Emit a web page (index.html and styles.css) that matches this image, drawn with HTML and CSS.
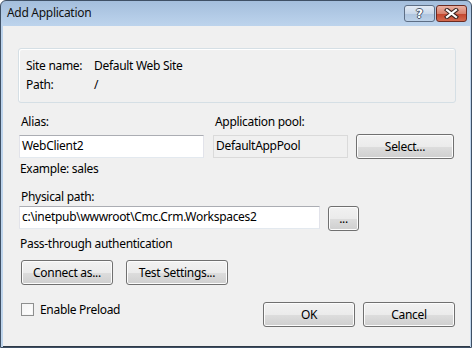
FILE: index.html
```html
<!DOCTYPE html>
<html lang="en">
<head>
  <meta charset="UTF-8" />
  <title>Add Application</title>
  <link rel="stylesheet" href="styles.css">
</head>
<body>

<div class="window">
  <!-- Title bar -->
  <div class="titlebar">
    <span class="title">Add Application</span>
    <div class="caption-btns">
      <div class="cap-btn help"><span>?</span></div>
      <div class="cap-btn close">
        <svg width="15" height="11" viewBox="0 0 15 11">
          <path d="M3 2 L12 9 M12 2 L3 9" stroke="#3a2420" stroke-width="4.2" stroke-linecap="square" fill="none"/>
          <path d="M3 2 L12 9 M12 2 L3 9" stroke="#fff" stroke-width="2.2" stroke-linecap="square" fill="none"/>
        </svg>
      </div>
    </div>
  </div>

  <!-- Client area -->
  <div class="client">
    <div class="groupbox">
      <div class="info-grid">
        <span>Site name:</span><span>Default Web Site</span>
        <span>Path:</span><span>/</span>
      </div>
    </div>

    <div class="alias-row">
      <div class="col alias-col">
        <label class="lbl">Alias:</label>
        <div class="textbox">WebClient2</div>
      </div>
      <div class="col pool-col">
        <label class="lbl lbl-low">Application pool:</label>
        <div class="textbox readonly">DefaultAppPool</div>
      </div>
      <div class="col select-col">
        <button class="btn select-btn">Select...</button>
      </div>
    </div>

    <p class="hint">Example: sales</p>

    <label class="lbl path-lbl">Physical path:</label>
    <div class="path-row">
      <div class="textbox path-box">c:\inetpub\wwwroot\Cmc.Crm.Workspaces2</div>
      <button class="btn browse-btn">...</button>
    </div>

    <p class="auth">Pass-through authentication</p>

    <div class="auth-btns">
      <button class="btn connect-btn">Connect as...</button>
      <button class="btn test-btn">Test Settings...</button>
    </div>

    <div class="bottom-row">
      <label class="check">
        <span class="checkbox"></span>
        Enable Preload
      </label>
      <div class="dialog-btns">
        <button class="btn ok-btn">OK</button>
        <button class="btn cancel-btn">Cancel</button>
      </div>
    </div>
  </div>
</div>

</body>
</html>
```

FILE: styles.css
```css
body {
  margin: 0;
  background-color: #fff;
  font-family: "Segoe UI", "Noto Sans", sans-serif;
  font-size: 12px;
  letter-spacing: -0.3px;
  color: #000;
}

.window {
  width: 472px;
  height: 348px;
  box-sizing: border-box;
  border: 1px solid #3f5065;
  border-radius: 6px 6px 0 0;
  background: linear-gradient(#a4bedc, #bcd3ec 24px, #bfd5ec);
  display: flex;
  flex-direction: column;
  padding: 0 1px 0 2px;
}

/* Title bar */
.titlebar {
  height: 25px;
  display: flex;
  justify-content: space-between;
  align-items: flex-start;
  flex-shrink: 0;
}
.title {
  padding: 4px 0 0 4px;
  line-height: 16px;
  color: #111;
}
.caption-btns {
  display: flex;
  gap: 1px;
  margin-top: 4px;
  margin-right: 3px;
}
.cap-btn {
  width: 29px;
  height: 15px;
  border: 1px solid #5d6e85;
  border-radius: 3px;
  display: flex;
  justify-content: center;
  align-items: center;
}
.cap-btn.help {
  background: linear-gradient(#e3ebf5, #c9d8ea 50%, #aec4de 51%, #bcd1e8);
}
.cap-btn.help span {
  font-family: "DejaVu Sans", sans-serif;
  font-weight: bold;
  font-size: 12px;
  line-height: 12px;
  letter-spacing: 0;
  color: #fff;
  text-shadow: 1px 0 #46566b, -1px 0 #46566b, 0 1px #46566b, 0 -1px #46566b;
}
.cap-btn.close {
  border-color: #6b2b22;
  background: linear-gradient(#eab1a3, #d8826e 50%, #c2442c 51%, #d46a4f);
}

/* Client area */
.client {
  flex: 1;
  background-color: #f0f0f0;
  padding: 22px 14px 0 15px;
  border-bottom: 1px solid #2e3a47;
}

.groupbox {
  border: 1px solid #d5dfe5;
  border-radius: 3px;
  box-shadow: inset 1px 1px 0 #fff;
  padding: 7px 7px 9px 7px;
  height: 37px;
}
.info-grid {
  display: grid;
  grid-template-columns: 68px auto;
  line-height: 19px;
}

.lbl {
  display: block;
  line-height: 16px;
  padding-left: 2px;
}
.lbl-low {
  padding-top: 2px;
  margin-bottom: -2px;
}

.alias-row {
  display: flex;
  align-items: flex-end;
  margin-top: 9px;
  padding-left: 1px;
}
.alias-col .lbl,
.pool-col .lbl {
  margin-bottom: 5px;
}
.alias-col {
  width: 185px;
}
.pool-col {
  width: 135px;
  margin-left: 9px;
}
.select-col {
  margin-left: 8px;
  margin-bottom: -1px;
}

.textbox {
  box-sizing: border-box;
  height: 23px;
  background-color: #fff;
  border: 1px solid #e2e3ea;
  border-top-color: #abadb3;
  border-bottom-color: #e3e9ef;
  padding: 0 2px;
  line-height: 20px;
}
.textbox.readonly {
  background-color: #f0f0f0;
  border-color: #dadada;
}

.btn {
  box-sizing: border-box;
  height: 25px;
  border: 1px solid #707070;
  border-radius: 3px;
  background: linear-gradient(#f2f2f2, #ebebeb 50%, #dddddd 51%, #cfcfcf);
  box-shadow: inset 0 0 0 1px #fcfcfc;
  font-family: inherit;
  font-size: 12px;
  letter-spacing: -0.3px;
  color: #000;
  padding: 0;
}
.select-btn {
  width: 98px;
}

.hint {
  margin: 3px 0 0 2px;
  line-height: 16px;
}
.path-lbl {
  margin-top: 12px;
  padding-left: 3px;
}
.path-row {
  display: flex;
  align-items: flex-start;
  margin-top: 1px;
  padding-left: 1px;
}
.path-box {
  width: 301px;
}
.browse-btn {
  width: 31px;
  margin-left: 8px;
}

.auth {
  margin: 5px 0 0 2px;
  line-height: 16px;
}

.auth-btns {
  display: flex;
  gap: 13px;
  margin-top: 8px;
  padding-left: 3px;
}
.connect-btn {
  width: 92px;
}
.test-btn {
  width: 102px;
}

.bottom-row {
  display: flex;
  justify-content: space-between;
  align-items: flex-start;
  margin-top: 17px;
  padding-left: 3px;
}
.check {
  display: flex;
  align-items: center;
  gap: 6px;
  margin-top: 1px;
  line-height: 13px;
}
.checkbox {
  box-sizing: border-box;
  width: 13px;
  height: 13px;
  border: 1px solid #8e8f8f;
  background: linear-gradient(135deg, #f4f4f4, #ffffff);
  box-shadow: inset 0 0 0 1px #f6f6f6;
}
.dialog-btns {
  display: flex;
  gap: 8px;
  margin-right: 1px;
}
.ok-btn,
.cancel-btn {
  width: 92px;
}
```
